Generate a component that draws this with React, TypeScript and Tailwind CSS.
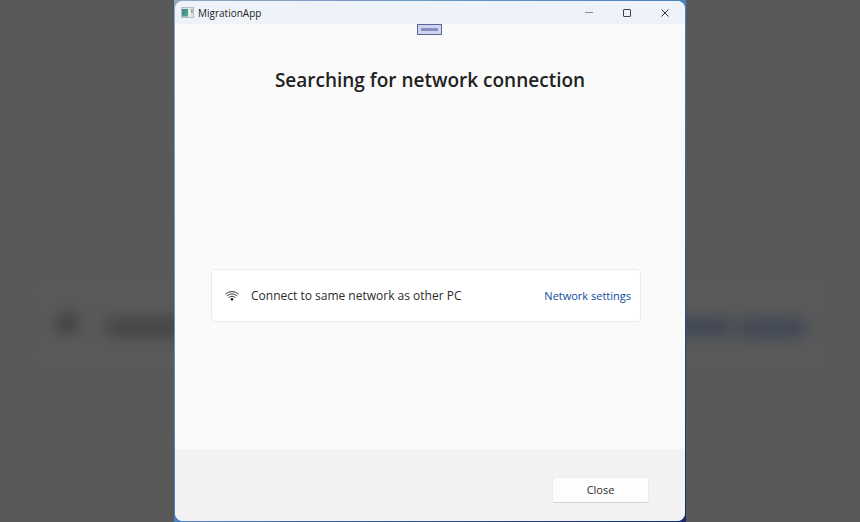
import React from "react";

const AppIcon: React.FC = () => (
  <svg className="w-[13px] h-[11px] shrink-0" viewBox="0 0 13 11" aria-hidden="true">
    <defs>
      <linearGradient id="screen" x1="0" y1="0" x2="1" y2="1">
        <stop offset="0" stopColor="#3f7fa0" />
        <stop offset="1" stopColor="#4fae78" />
      </linearGradient>
    </defs>
    <rect x="0.5" y="0.5" width="12" height="10" fill="#dfe3e5" stroke="#b9bec2" />
    <rect x="1" y="2" width="6" height="7.5" fill="url(#screen)" />
    <rect x="7.5" y="2" width="2" height="7.5" fill="#eef1f2" />
    <rect x="10.3" y="2" width="1.2" height="4" fill="#5f9c80" />
  </svg>
);

const WifiIcon: React.FC = () => (
  <svg
    className="w-[14px] h-[11px] shrink-0"
    viewBox="0 0 14 11"
    fill="none"
    stroke="#3a3a3a"
    strokeLinecap="round"
    aria-hidden="true"
  >
    <path d="M0.7 4a8.9 8.9 0 0 1 12.6 0" />
    <path d="M2.3 5.7a6.6 6.6 0 0 1 9.4 0" />
    <path d="M4 7.4a4.2 4.2 0 0 1 6 0" />
    <circle cx="7" cy="9.3" r="1.3" fill="#1b1b1b" stroke="none" />
  </svg>
);

// Dimmed, out-of-focus copy of the network card behind the window
const Backdrop: React.FC = () => (
  <div className="absolute inset-0 overflow-hidden" aria-hidden="true">
    <div className="absolute left-[35px] right-[35px] top-[282px] h-[86px] rounded-lg bg-[#5a5a5a] blur-[2px]" />
    <div className="absolute left-[56px] top-[313px] h-5 w-[22px] rounded-full bg-[#3c3c3c] blur-[8px]" />
    <div className="absolute left-[104px] top-[318px] h-[18px] w-[180px] rounded-full bg-[#434343] blur-[8px]" />
    <div className="absolute right-[126px] top-[318px] h-[18px] w-[200px] rounded-full bg-[#3e4554] blur-[8px]" />
    <div className="absolute right-[52px] top-[319px] h-[18px] w-[72px] rounded-full bg-[#3e4554] blur-[8px]" />
  </div>
);

const TitleBar: React.FC = () => (
  <header className="flex h-[23px] shrink-0 items-center bg-[#eef3fa] pl-[6px] pr-px">
    <AppIcon />
    <span className="ml-1 flex-1 text-[10px] leading-4 text-[#1f1f1f]">MigrationApp</span>
    <button type="button" aria-label="Minimize" className="flex h-full w-[38px] items-center justify-center">
      <svg className="h-2 w-2" viewBox="0 0 8 8" stroke="#8a8d91" aria-hidden="true">
        <path d="M0 3.5h8" />
      </svg>
    </button>
    <button type="button" aria-label="Maximize" className="flex h-full w-[38px] items-center justify-center">
      <svg className="h-2 w-2" viewBox="0 0 8 8" fill="none" stroke="#444" aria-hidden="true">
        <rect x="0.5" y="0.5" width="7" height="7" rx="0.5" />
      </svg>
    </button>
    <button type="button" aria-label="Close window" className="flex h-full w-[38px] items-center justify-center">
      <svg className="h-2 w-2" viewBox="0 0 8 8" fill="none" stroke="#333" aria-hidden="true">
        <path d="M0.5 0.5l7 7M7.5 0.5l-7 7" />
      </svg>
    </button>
  </header>
);

const NetworkCard: React.FC = () => (
  <section className="flex h-[53px] items-center rounded-[4px] border border-[#ebebeb] bg-white pl-[13px] pr-[9px]">
    <WifiIcon />
    <p className="ml-3 flex-1 text-xs leading-5 text-[#2b2b2b]">Connect to same network as other PC</p>
    <a href="#network-settings" className="text-[11px] leading-5 text-[#0f4aa0]">
      Network settings
    </a>
  </section>
);

export default function App() {
  return (
    <div className="relative flex min-h-screen justify-center bg-[#595959] font-['Open_Sans','Noto_Sans',sans-serif]">
      <Backdrop />
      <div className="relative flex w-full max-w-[512px] bg-linear-to-br from-[#8fa9c4] via-[#4a82c4] to-[#14296b] p-px">
        <div className="flex flex-1 flex-col overflow-hidden rounded-lg bg-[#fafafa]">
          <TitleBar />
          <main className="flex flex-1 flex-col">
            <button
              type="button"
              aria-label="Debug toolbar"
              className="ml-[242px] flex h-[11px] w-[25px] items-center justify-center border border-[#5b6496] bg-[#cdd5f3]"
            >
              <span className="h-[3px] w-[17px] bg-[#8690be]" />
            </button>
            <h1 className="mt-[31px] text-center text-[19px] font-semibold leading-7 text-[#222]">
              Searching for network connection
            </h1>
            <div className="flex flex-1 items-center pb-[3px] pl-9 pr-11 pt-[51px]">
              <div className="flex-1">
                <NetworkCard />
              </div>
            </div>
          </main>
          <footer className="flex shrink-0 justify-end bg-[#f2f2f2] pb-[18px] pl-9 pr-9 pt-7">
            <button
              type="button"
              className="h-[26px] w-[97px] rounded-[3px] border border-[#ebebeb] border-b-[#d4d4d4] bg-[#fdfdfd] text-[11px] text-[#2b2b2b]"
            >
              Close
            </button>
          </footer>
        </div>
      </div>
    </div>
  );
}
